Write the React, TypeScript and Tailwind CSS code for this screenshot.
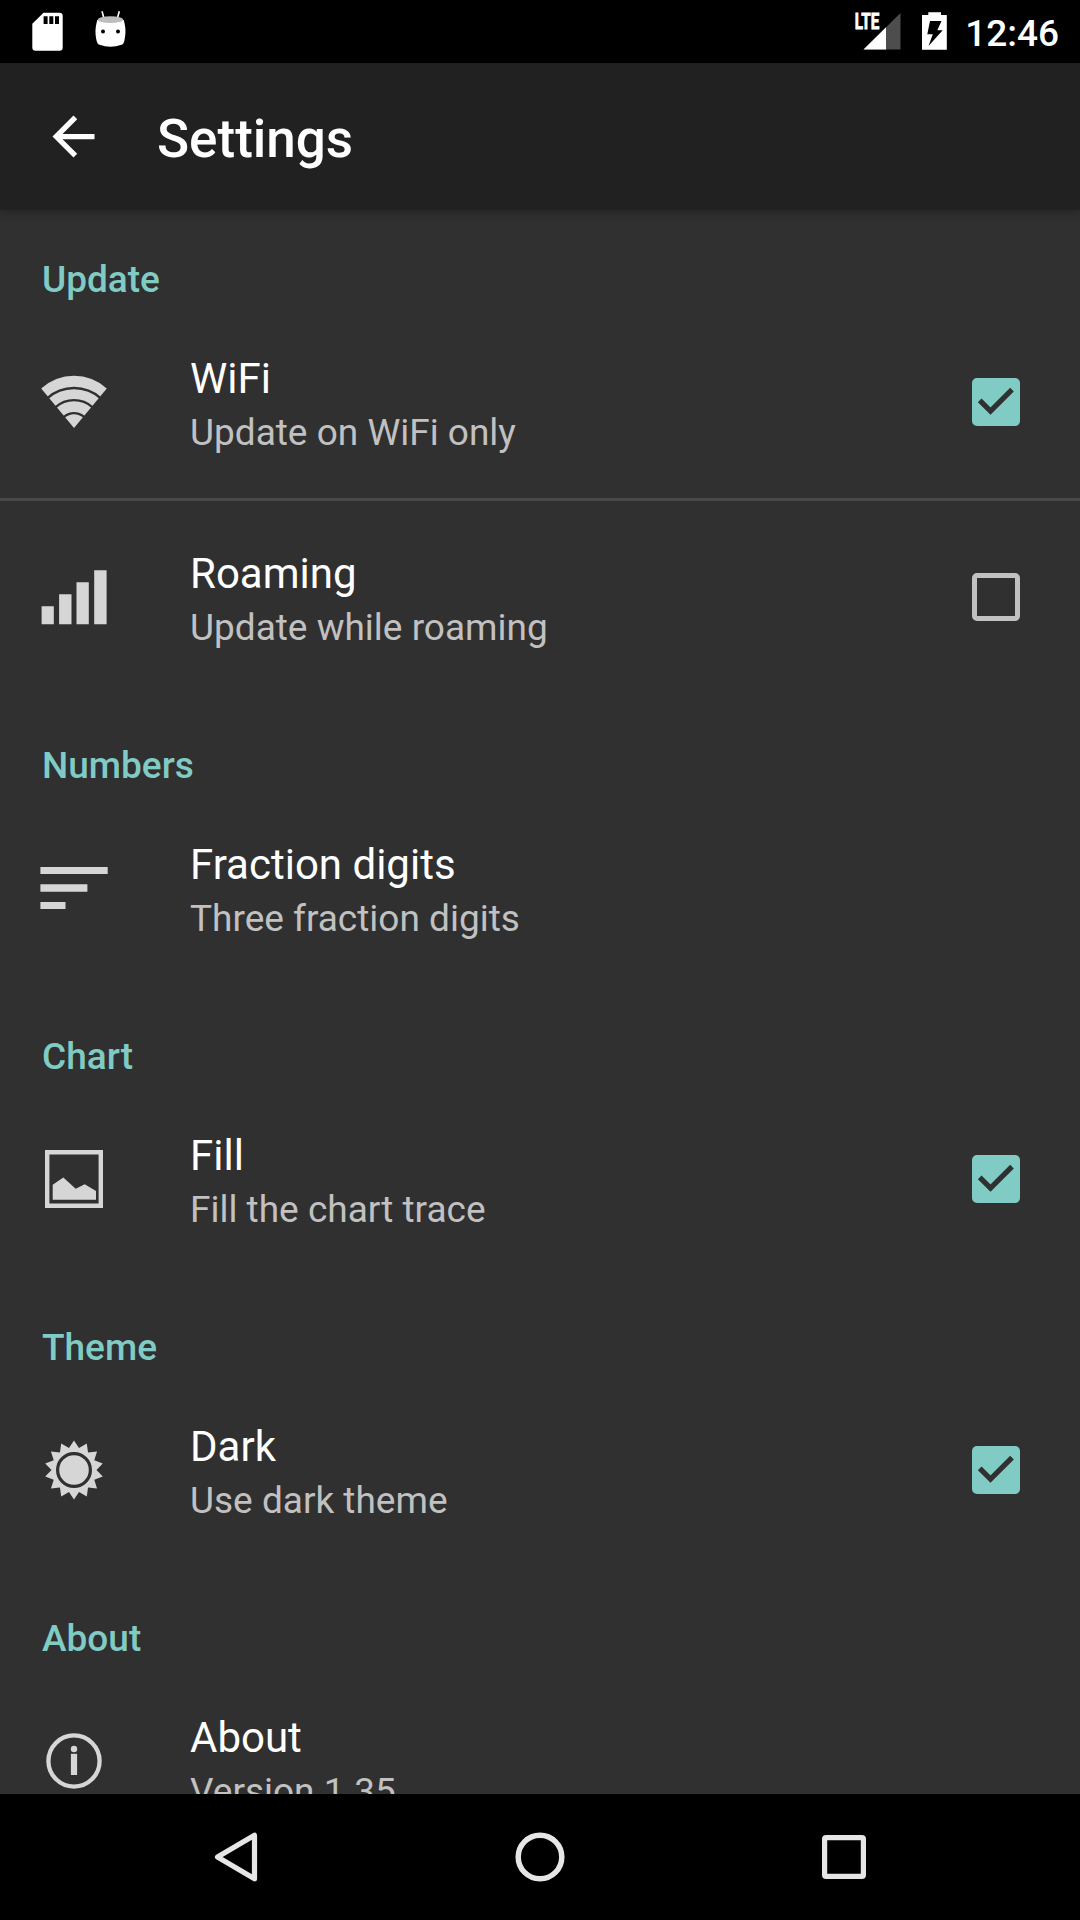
import type { ReactNode } from "react";

const ICON = "#d6d6d6";

const SUN_POINTS = Array.from({ length: 28 }, (_, i) => {
  const r = i % 2 === 0 ? 29.5 : 22.5;
  const a = (i * Math.PI) / 14;
  return `${(42 + r * Math.sin(a)).toFixed(2)},${(42 - r * Math.cos(a)).toFixed(2)}`;
}).join(" ");

function Icon({ children }: { children: ReactNode }) {
  return (
    <svg viewBox="0 0 84 84" className="h-[84px] w-[84px] shrink-0" fill={ICON}>
      {children}
    </svg>
  );
}

const WifiIcon = () => (
  <Icon>
    <path d="M42 68 9.2 28.4A48.7 48.7 0 0 1 74.8 28.4Z" />
    <g fill="none" stroke="#303030" strokeWidth="2.3">
      <path d="M15.2 38.3A40 40 0 0 1 68.8 38.3" />
      <path d="M23.4 47.3A27.8 27.8 0 0 1 60.6 47.3" />
      <path d="M32 56.9A15 15 0 0 1 52 56.9" />
    </g>
  </Icon>
);

const SignalIcon = () => (
  <Icon>
    <path d="M9.6 51.2h12.2v18H9.6zM27.1 39.2h12.4v30H27.1zM44.5 27.2h12.3v42H44.5zM62.2 15.2h12.4v54H62.2z" />
  </Icon>
);

const SortIcon = () => (
  <Icon>
    <path d="M8.4 21h67.3v7H8.4zM8.4 38.3h47v7.4h-47zM8.4 56h25.1v7H8.4z" />
  </Icon>
);

const PictureIcon = () => (
  <Icon>
    <path fillRule="evenodd" d="M13 13h58v58H13zM17.4 17.4v49.2h49.2V17.4z" />
    <path d="M20.7 62.8V47.7L31.3 40.4 43.7 51.7 52.7 47.2 64 54v8.8z" />
  </Icon>
);

const SunIcon = () => (
  <Icon>
    <polygon points={SUN_POINTS} />
    <circle cx="42" cy="42" r="16.4" stroke="#303030" strokeWidth="3.2" />
  </Icon>
);

const InfoIcon = () => (
  <Icon>
    <circle cx="42" cy="42" r="25.6" fill="none" stroke={ICON} strokeWidth="4.3" />
    <circle cx="42" cy="30" r="3.2" />
    <path d="M38.9 34.8h6.2V56h-6.2z" />
  </Icon>
);

function Checkbox({ checked }: { checked: boolean }) {
  return checked ? (
    <span className="ml-auto mr-[60px] h-12 w-12 rounded-[5px] bg-[#80cbc4]">
      <svg viewBox="0 0 48 48" className="h-12 w-12">
        <path d="M7.7 22.3 18.5 33 40 11.6" fill="none" stroke="#303030" strokeWidth="5.2" />
      </svg>
    </span>
  ) : (
    <span className="ml-auto mr-[60px] h-12 w-12 rounded-[5px] border-[5px] border-[#c1c1c1]" />
  );
}

function Category({ title }: { title: string }) {
  return (
    <h2 className="flex h-[99px] shrink-0 items-end px-[42px] pb-[4px] text-[37px] leading-[44px] font-medium text-[#80cbc4]">
      {title}
    </h2>
  );
}

type RowProps = { icon: ReactNode; title: string; summary: string; checked?: boolean };

function Row({ icon, title, summary, checked }: RowProps) {
  return (
    <div className="flex h-48 shrink-0 items-center pl-8">
      {icon}
      <div className="ml-[74px] h-48 pt-[47px] whitespace-nowrap">
        <div className="text-[42px] leading-[52px] text-white">{title}</div>
        <div className="text-[37px] leading-[55px] text-[#c1c1c1]">{summary}</div>
      </div>
      {checked !== undefined && <Checkbox checked={checked} />}
    </div>
  );
}

function StatusBar() {
  return (
    <div className="flex h-[63px] shrink-0 items-center bg-black text-white">
      <svg viewBox="28 0 40 63" className="ml-7 h-[63px] w-10">
        <path d="M43.5 12.7H59.5a3.2 3.2 0 0 1 3.2 3.2V47.5a3.2 3.2 0 0 1-3.2 3.2h-24a3.2 3.2 0 0 1-3.2-3.2V23.8z" fill="#fff" />
        <path d="M43.6 16.3h4v7.7h-4zM49.3 16.3h4v7.7h-4zM55 16.3h4v7.7h-4z" fill="#000" />
      </svg>
      <svg viewBox="90 0 40 63" className="ml-[22px] h-[63px] w-10">
        <path d="M102 11.3 104 18.5M119.3 11.3 117.3 18.5" stroke="#fff" strokeWidth="1.6" />
        <path d="M97.3 20C95 28 95 34 96.8 41.5Q97.3 44 99.5 44.8Q110.5 48.5 121.5 44.8Q123.7 44 124.2 41.5C126 34 126 28 123.7 20Q110.5 14 97.3 20Z" fill="#fff" />
        <ellipse cx="110.5" cy="19.7" rx="12.6" ry="3.4" fill="#bdbdbd" />
        <circle cx="103" cy="31.5" r="2" fill="#000" />
        <circle cx="118" cy="31.5" r="2" fill="#000" />
      </svg>
      <svg viewBox="852 0 52 63" className="ml-auto h-[63px] w-[52px]">
        <path d="M900.5 13v36.5h-37z" fill="#4d4d4d" />
        <path d="M886 27.3v22.2h-22.5z" fill="#fff" />
        <text x="854.8" y="29" fill="#fff" stroke="#fff" strokeWidth="0.8" fontFamily="Roboto" fontWeight="700" fontSize="21.5" textLength="24.5" lengthAdjust="spacingAndGlyphs">
          LTE
        </text>
      </svg>
      <svg viewBox="918 0 34 63" className="ml-[14px] h-[63px] w-[34px]">
        <path d="M928.3 12.3H941V15h5.8v34.7H922V15h6.3z" fill="#fff" />
        <path d="M930 21h11.5l-4.2 9.2h5.4L928.5 46l4.3-11.8h-5.5z" fill="#000" />
      </svg>
      <span className="mr-[21px] ml-[13px] pt-[4px] text-[37px] leading-none font-medium">12:46</span>
    </div>
  );
}

function AppBar() {
  return (
    <header className="z-10 flex h-[147px] shrink-0 items-center bg-[#212121] pl-[42px] shadow-[0_3px_8px_rgba(0,0,0,0.25)]">
      <svg viewBox="0 0 24 24" className="h-[63px] w-[63px]" fill="#fff">
        <path d="M20 11H7.83l5.59-5.59L12 4l-8 8 8 8 1.41-1.41L7.83 13H20v-2z" />
      </svg>
      <h1 className="ml-[52px] pt-1 text-[53px] leading-[60px] font-medium text-white">Settings</h1>
    </header>
  );
}

function NavBar() {
  return (
    <nav className="flex h-[126px] shrink-0 items-center justify-center gap-[220px] bg-black">
      <svg viewBox="0 0 84 84" className="h-[84px] w-[84px]" fill="none" stroke="#e6e6e6" strokeWidth="5.2" strokeLinejoin="round">
        <path d="M60.5 20.2V63.8L23.5 42z" />
      </svg>
      <svg viewBox="0 0 84 84" className="h-[84px] w-[84px]" fill="none" stroke="#e6e6e6" strokeWidth="5.5">
        <circle cx="42" cy="42" r="21.8" />
      </svg>
      <svg viewBox="0 0 84 84" className="h-[84px] w-[84px]" fill="none" stroke="#e6e6e6" strokeWidth="5.2">
        <rect x="22.6" y="22.6" width="38.8" height="38.8" rx="1.5" />
      </svg>
    </nav>
  );
}

export default function App() {
  return (
    <div className="flex h-[1920px] w-[1080px] flex-col overflow-hidden bg-[#303030] font-[Roboto,sans-serif]">
      <StatusBar />
      <AppBar />
      <main className="flex min-h-0 flex-1 flex-col overflow-hidden">
        <div className="-mt-[3px] flex shrink-0 flex-col">
          <Category title="Update" />
          <Row icon={<WifiIcon />} title="WiFi" summary="Update on WiFi only" checked />
          <div className="h-[3px] bg-[#484848]" />
          <Row icon={<SignalIcon />} title="Roaming" summary="Update while roaming" checked={false} />
          <Category title="Numbers" />
          <Row icon={<SortIcon />} title="Fraction digits" summary="Three fraction digits" />
          <Category title="Chart" />
          <Row icon={<PictureIcon />} title="Fill" summary="Fill the chart trace" checked />
          <Category title="Theme" />
          <Row icon={<SunIcon />} title="Dark" summary="Use dark theme" checked />
          <Category title="About" />
          <Row icon={<InfoIcon />} title="About" summary="Version 1.35" />
        </div>
      </main>
      <NavBar />
    </div>
  );
}
